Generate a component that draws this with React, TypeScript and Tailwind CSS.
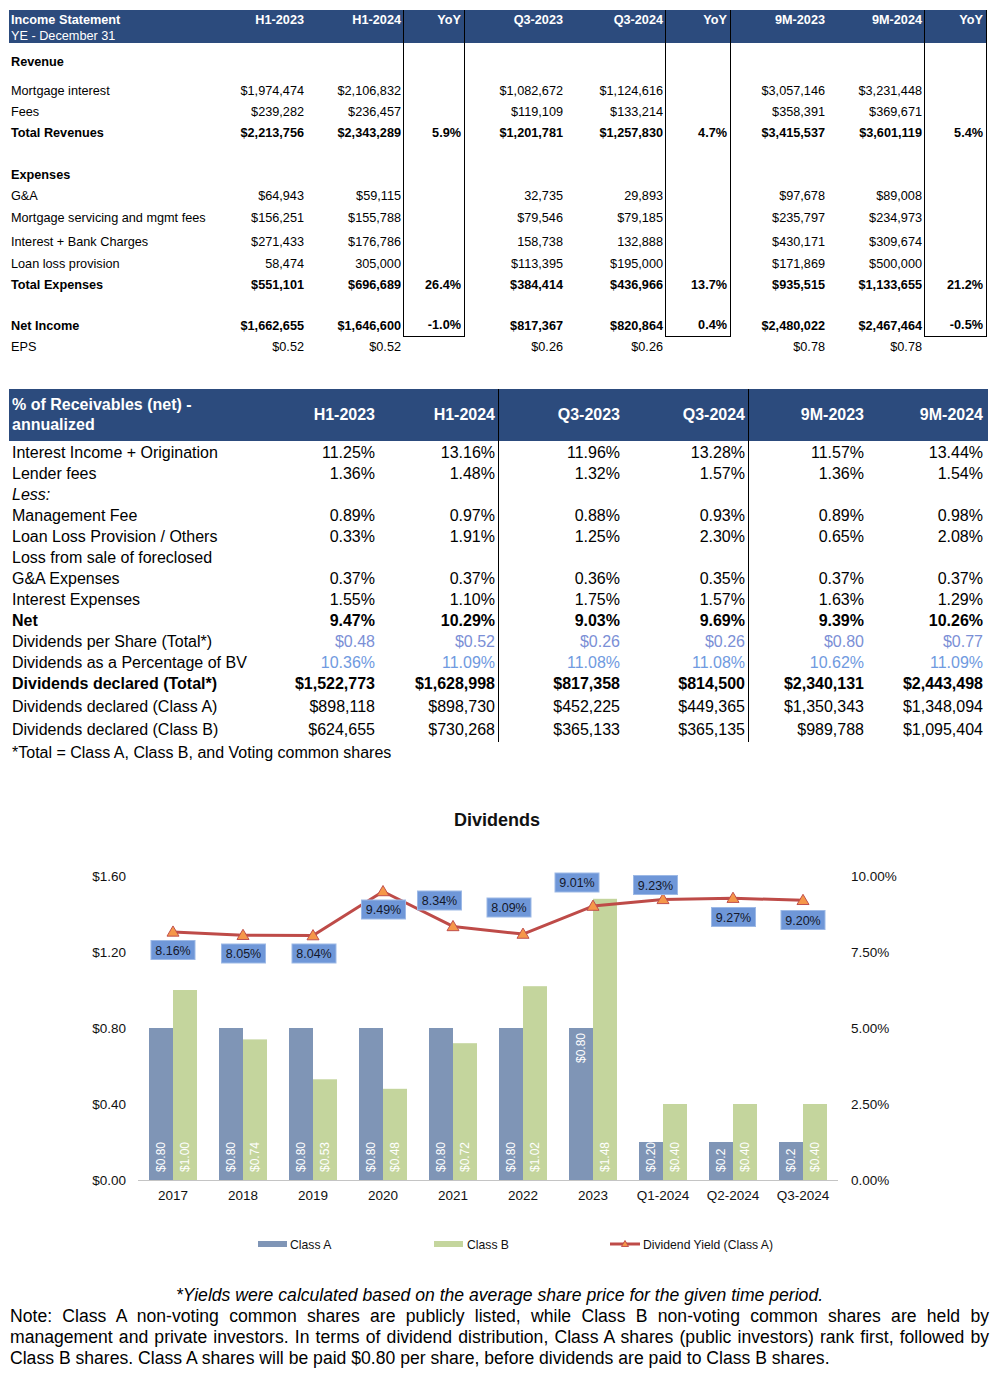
import React from "react";

type TopRow = {
  label?: string;
  v?: string[];
  bold?: boolean;
  h: string;
  box?: boolean;
  last?: boolean;
};

const topRows: TopRow[] = [
  { h: "h-[10px]", box: true },
  { label: "Revenue", bold: true, h: "h-[20px]", box: true },
  { h: "h-[8px]", box: true },
  { label: "Mortgage interest", h: "h-[21px]", box: true, v: ["$1,974,474", "$2,106,832", "", "$1,082,672", "$1,124,616", "", "$3,057,146", "$3,231,448", ""] },
  { label: "Fees", h: "h-[21px]", box: true, v: ["$239,282", "$236,457", "", "$119,109", "$133,214", "", "$358,391", "$369,671", ""] },
  { label: "Total Revenues", bold: true, h: "h-[21px]", box: true, v: ["$2,213,756", "$2,343,289", "5.9%", "$1,201,781", "$1,257,830", "4.7%", "$3,415,537", "$3,601,119", "5.4%"] },
  { h: "h-[21px]", box: true },
  { label: "Expenses", bold: true, h: "h-[21px]", box: true },
  { label: "G&A", h: "h-[21px]", box: true, v: ["$64,943", "$59,115", "", "32,735", "29,893", "", "$97,678", "$89,008", ""] },
  { label: "Mortgage servicing and mgmt fees", h: "h-[24px]", box: true, v: ["$156,251", "$155,788", "", "$79,546", "$79,185", "", "$235,797", "$234,973", ""] },
  { label: "Interest + Bank Charges", h: "h-[23px]", box: true, v: ["$271,433", "$176,786", "", "158,738", "132,888", "", "$430,171", "$309,674", ""] },
  { label: "Loan loss provision", h: "h-[21px]", box: true, v: ["58,474", "305,000", "", "$113,395", "$195,000", "", "$171,869", "$500,000", ""] },
  { label: "Total Expenses", bold: true, h: "h-[21px]", box: true, v: ["$551,101", "$696,689", "26.4%", "$384,414", "$436,966", "13.7%", "$935,515", "$1,133,655", "21.2%"] },
  { h: "h-[20px]", box: true },
  { label: "Net Income", bold: true, h: "h-[21px]", box: true, last: true, v: ["$1,662,655", "$1,646,600", "-1.0%", "$817,367", "$820,864", "0.4%", "$2,480,022", "$2,467,464", "-0.5%"] },
  { label: "EPS", h: "h-[21px]", v: ["$0.52", "$0.52", "", "$0.26", "$0.26", "", "$0.78", "$0.78", ""] },
];

const topHead = ["H1-2023", "H1-2024", "YoY", "Q3-2023", "Q3-2024", "YoY", "9M-2023", "9M-2024", "YoY"];

type RecRow = {
  label: string;
  v?: string[];
  bold?: boolean;
  italic?: boolean;
  color?: string;
  h: string;
};

const recRows: RecRow[] = [
  { label: "Interest Income + Origination", h: "h-[21px]", v: ["11.25%", "13.16%", "11.96%", "13.28%", "11.57%", "13.44%"] },
  { label: "Lender fees", h: "h-[21px]", v: ["1.36%", "1.48%", "1.32%", "1.57%", "1.36%", "1.54%"] },
  { label: "Less:", italic: true, h: "h-[21px]" },
  { label: "Management Fee", h: "h-[21px]", v: ["0.89%", "0.97%", "0.88%", "0.93%", "0.89%", "0.98%"] },
  { label: "Loan Loss Provision / Others", h: "h-[21px]", v: ["0.33%", "1.91%", "1.25%", "2.30%", "0.65%", "2.08%"] },
  { label: "Loss from sale of foreclosed", h: "h-[21px]" },
  { label: "G&A Expenses", h: "h-[21px]", v: ["0.37%", "0.37%", "0.36%", "0.35%", "0.37%", "0.37%"] },
  { label: "Interest Expenses", h: "h-[21px]", v: ["1.55%", "1.10%", "1.75%", "1.57%", "1.63%", "1.29%"] },
  { label: "Net", bold: true, h: "h-[21px]", v: ["9.47%", "10.29%", "9.03%", "9.69%", "9.39%", "10.26%"] },
  { label: "Dividends per Share (Total*)", color: "text-[#7b8fd6]", h: "h-[21px]", v: ["$0.48", "$0.52", "$0.26", "$0.26", "$0.80", "$0.77"] },
  { label: "Dividends as a Percentage of BV", color: "text-[#6f9ae0]", h: "h-[21px]", v: ["10.36%", "11.09%", "11.08%", "11.08%", "10.62%", "11.09%"] },
  { label: "Dividends declared (Total*)", bold: true, h: "h-[23px]", v: ["$1,522,773", "$1,628,998", "$817,358", "$814,500", "$2,340,131", "$2,443,498"] },
  { label: "Dividends declared (Class A)", h: "h-[23px]", v: ["$898,118", "$898,730", "$452,225", "$449,365", "$1,350,343", "$1,348,094"] },
  { label: "Dividends declared (Class B)", h: "h-[23px]", v: ["$624,655", "$730,268", "$365,133", "$365,135", "$989,788", "$1,095,404"] },
];

const recHead = ["H1-2023", "H1-2024", "Q3-2023", "Q3-2024", "9M-2023", "9M-2024"];

const cats = ["2017", "2018", "2019", "2020", "2021", "2022", "2023", "Q1-2024", "Q2-2024", "Q3-2024"];
const classA = [0.8, 0.8, 0.8, 0.8, 0.8, 0.8, 0.8, 0.2, 0.2, 0.2];
const classB = [1.0, 0.74, 0.53, 0.48, 0.72, 1.02, 1.48, 0.4, 0.4, 0.4];
const labelA = ["$0.80", "$0.80", "$0.80", "$0.80", "$0.80", "$0.80", "$0.80", "$0.20", "$0.2", "$0.2"];
const labelB = ["$1.00", "$0.74", "$0.53", "$0.48", "$0.72", "$1.02", "$1.48", "$0.40", "$0.40", "$0.40"];
const yields = [8.16, 8.05, 8.04, 9.49, 8.34, 8.09, 9.01, 9.23, 9.27, 9.2];
const yieldBox: [number, number][] = [
  [173, 950], [243.5, 953.5], [314, 953.5], [383.5, 909.5], [439.5, 900.5],
  [509, 907.5], [577, 882.5], [655.5, 885], [733.5, 917], [803, 920],
];

const BASE = 1180;
const PER_DOLLAR = 190;
const PER_PCT = 30.4;

const BAR_A = "#7f95b6";
const BAR_B = "#c4d59d";
const LINE = "#be4b48";

function Triangle({ x, y, s = 6 }: { x: number; y: number; s?: number }) {
  return (
    <polygon
      points={`${x},${y - s} ${x - s},${y + s * 0.7} ${x + s},${y + s * 0.7}`}
      fill="#f59749"
      stroke="#c0504d"
      strokeWidth={1}
    />
  );
}

function DividendChart() {
  const pts = yields.map((p, i) => [173 + 70 * i, BASE - p * PER_PCT]);
  return (
    <svg width={996} height={480} viewBox="0 790 996 480" className="block">
      <text x={497} y={826} textAnchor="middle" fontSize={18} fontWeight="bold" fill="#111">
        Dividends
      </text>

      {["$1.60", "$1.20", "$0.80", "$0.40", "$0.00"].map((t, i) => (
        <text key={t} x={126} y={876 + i * 76 + 5} textAnchor="end" fontSize={13.5} fill="#111">
          {t}
        </text>
      ))}
      {["10.00%", "7.50%", "5.00%", "2.50%", "0.00%"].map((t, i) => (
        <text key={t} x={851} y={876 + i * 76 + 5} fontSize={13.5} fill="#111">
          {t}
        </text>
      ))}

      {cats.map((c, i) => {
        const cx = 173 + 70 * i;
        const ha = classA[i] * PER_DOLLAR;
        const hb = classB[i] * PER_DOLLAR;
        const ax = cx - 12;
        const bx = cx + 12;
        const topLabel = i === 6;
        return (
          <g key={c}>
            <rect x={cx - 24} y={BASE - ha} width={24} height={ha} fill={BAR_A} />
            <rect x={cx} y={BASE - hb} width={24} height={hb} fill={BAR_B} />
            {topLabel ? (
              <text
                x={ax}
                y={BASE - ha + 5}
                transform={`rotate(-90 ${ax} ${BASE - ha + 5})`}
                textAnchor="end"
                dominantBaseline="central"
                fontSize={12}
                fill="#fff"
              >
                {labelA[i]}
              </text>
            ) : (
              <text
                x={ax}
                y={1172}
                transform={`rotate(-90 ${ax} 1172)`}
                dominantBaseline="central"
                fontSize={12}
                fill="#fff"
              >
                {labelA[i]}
              </text>
            )}
            <text
              x={bx}
              y={1172}
              transform={`rotate(-90 ${bx} 1172)`}
              dominantBaseline="central"
              fontSize={12}
              fill="#fff"
            >
              {labelB[i]}
            </text>
            <text x={cx} y={1200} textAnchor="middle" fontSize={13.5} fill="#111">
              {c}
            </text>
          </g>
        );
      })}

      <line x1={138} y1={1180.5} x2={838} y2={1180.5} stroke="#c4c4c4" strokeWidth={1} />

      <polyline
        points={pts.map((p) => p.join(",")).join(" ")}
        fill="none"
        stroke={LINE}
        strokeWidth={3}
        strokeLinejoin="round"
      />
      {pts.map(([x, y], i) => (
        <Triangle key={i} x={x} y={y} />
      ))}

      {yieldBox.map(([x, y], i) => (
        <g key={i}>
          <rect x={x - 22} y={y - 9.5} width={44} height={19} fill="#6f97d8" stroke="#9db9e6" strokeWidth={1} />
          <text x={x} y={y + 4.5} textAnchor="middle" fontSize={12.5} fill="#15172a">
            {yields[i].toFixed(2)}%
          </text>
        </g>
      ))}

      {/* legend */}
      <rect x={258} y={1241} width={29} height={6} fill={BAR_A} />
      <text x={290} y={1248.5} fontSize={12.2} fill="#111">Class A</text>
      <rect x={434} y={1241} width={29} height={6} fill={BAR_B} />
      <text x={467} y={1248.5} fontSize={12.2} fill="#111">Class B</text>
      <line x1={610} y1={1244} x2={640} y2={1244} stroke={LINE} strokeWidth={3} />
      <Triangle x={625} y={1244} s={3.5} />
      <text x={643} y={1248.5} fontSize={12.2} fill="#111">Dividend Yield (Class A)</text>
    </svg>
  );
}

export default function App() {
  return (
    <div className="w-[996px] min-h-[1382px] bg-white font-['Liberation_Sans',Arial,sans-serif] text-black">
      {/* Income statement */}
      <div className="ml-[9px] w-[978px] pt-[10px] text-[12.7px]">
        <div className="grid h-[33px] grid-cols-[201px_96px_97px_62px_100px_100px_66px_96px_97px_63px] bg-[#2c4b7d] leading-[16px] text-white">
          <div className="pl-[2px] pt-[2px]">
            <div className="font-bold">Income Statement</div>
            <div>YE - December 31</div>
          </div>
          {topHead.map((h, i) => (
            <div
              key={i}
              className={`pt-[2px] text-right font-bold ${i % 3 === 2 ? "border-x border-black pr-[3px]" : "pr-[2px]"}`}
            >
              {h}
            </div>
          ))}
        </div>
        {topRows.map((r, ri) => (
          <div
            key={ri}
            className={`grid grid-cols-[201px_96px_97px_62px_100px_100px_66px_96px_97px_63px] items-center ${r.h} ${r.bold ? "font-bold" : ""}`}
          >
            <div className="whitespace-nowrap pl-[2px]">{r.label}</div>
            {Array.from({ length: 9 }).map((_, i) => {
              const yoy = i % 3 === 2;
              const boxed = yoy && r.box;
              return (
                <div
                  key={i}
                  className={`flex h-full items-center justify-end whitespace-nowrap ${
                    boxed ? "border-x border-black pr-[3px]" : "pr-[2px]"
                  } ${boxed && r.last ? "border-b" : ""}`}
                >
                  {r.v ? r.v[i] : ""}
                </div>
              );
            })}
          </div>
        ))}
      </div>

      {/* Receivables */}
      <div className="ml-[9px] mt-[31px] w-[979px] text-[16px]">
        <div className="grid h-[52px] grid-cols-[251px_118px_120px_125px_125px_119px_121px] bg-[#2c4b7d] font-bold leading-[20px] text-white">
          <div className="flex flex-col justify-center pl-[3px]">
            <div>% of Receivables (net) -</div>
            <div>annualized</div>
          </div>
          {recHead.map((h, i) => (
            <div
              key={h}
              className={`flex items-center justify-end ${i === 2 || i === 4 ? "border-l border-black" : ""} ${
                i === 5 ? "pr-[5px]" : "pr-[3px]"
              }`}
            >
              {h}
            </div>
          ))}
        </div>
        {recRows.map((r, ri) => (
          <div
            key={ri}
            className={`grid grid-cols-[251px_118px_120px_125px_125px_119px_121px] ${r.h} ${r.bold ? "font-bold" : ""}`}
          >
            <div className={`flex items-center whitespace-nowrap pl-[3px] ${r.italic ? "italic" : ""}`}>{r.label}</div>
            {Array.from({ length: 6 }).map((_, i) => (
              <div
                key={i}
                className={`flex items-center justify-end whitespace-nowrap ${r.color ?? ""} ${
                  i === 2 || i === 4 ? "border-l border-black" : ""
                } ${i === 5 ? "pr-[5px]" : "pr-[3px]"}`}
              >
                {r.v ? r.v[i] : ""}
              </div>
            ))}
          </div>
        ))}
        <div className="flex h-[23px] items-center pl-[3px]">*Total = Class A, Class B, and Voting common shares</div>
      </div>

      {/* Chart */}
      <div className="mt-[26px]">
        <DividendChart />
      </div>

      {/* Notes */}
      <div className="mt-[15px] pl-[10px] pr-[7px] text-[17.6px] leading-[21px]">
        <p className="text-center italic">
          *Yields were calculated based on the average share price for the given time period.
        </p>
        <p className="text-justify">
          Note: Class A non-voting common shares are publicly listed, while Class B non-voting common shares are held by
          management and private investors. In terms of dividend distribution, Class A shares (public investors) rank
          first, followed by Class B shares. Class A shares will be paid $0.80 per share, before dividends are paid to
          Class B shares.
        </p>
      </div>
    </div>
  );
}
